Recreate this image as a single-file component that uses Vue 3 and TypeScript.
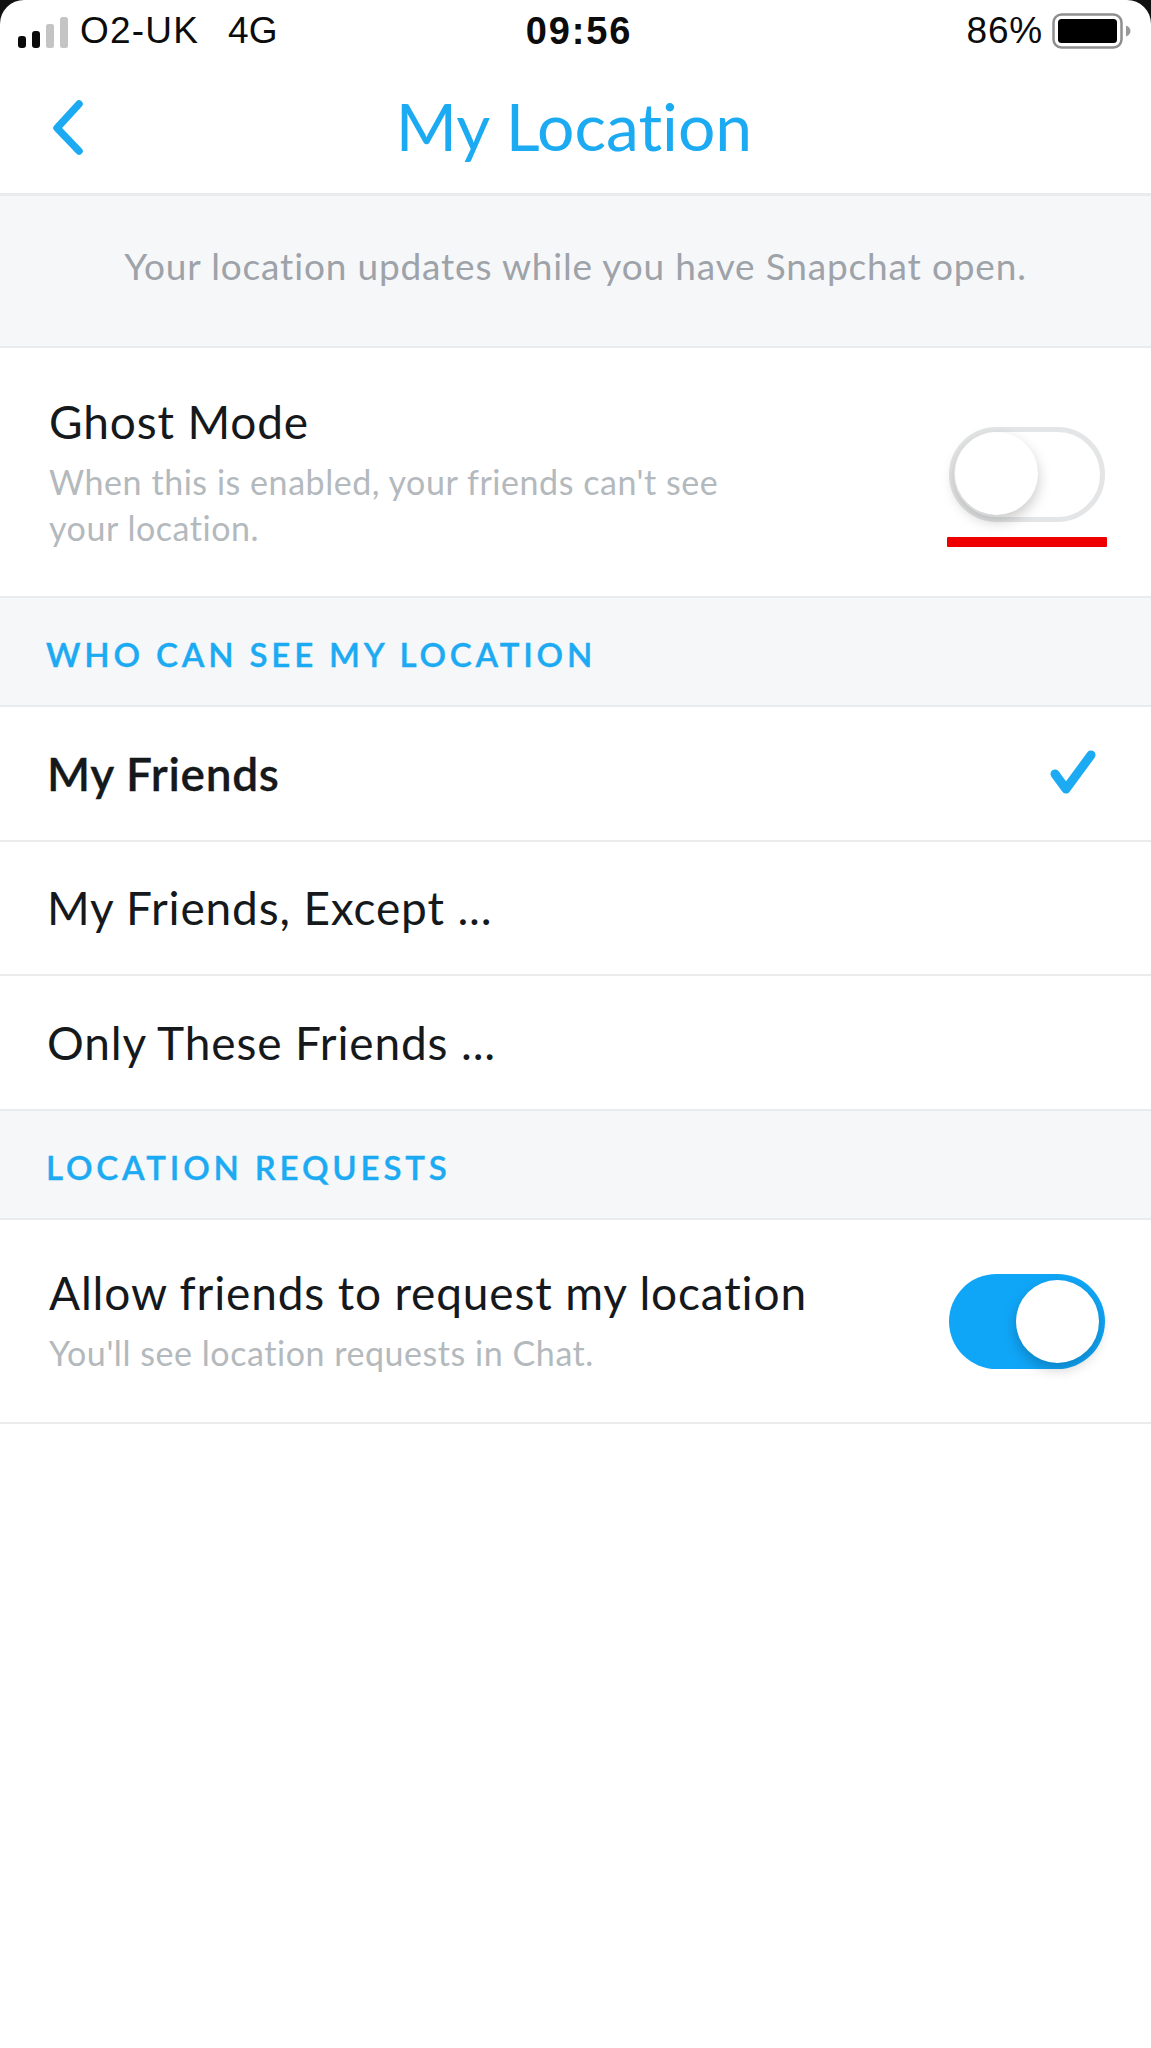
<script setup lang="ts">
const friendRows = [
  { label: 'My Friends', selected: true },
  { label: 'My Friends, Except ...', selected: false },
  { label: 'Only These Friends ...', selected: false },
]
</script>

<template>
  <div class="screen">
    <div class="status">
      <span class="corner corner-l"></span>
      <span class="corner corner-r"></span>
      <div class="status-left">
        <svg class="signal" width="50" height="32" viewBox="0 0 50 32">
          <rect x="0" y="20" width="8" height="12" rx="3" fill="#0a0a0a" />
          <rect x="14" y="15" width="8" height="17" rx="3" fill="#0a0a0a" />
          <rect x="28" y="8" width="8" height="24" rx="2.500" fill="#c4c4c4" />
          <rect x="42" y="1" width="8" height="31" rx="2.500" fill="#c4c4c4" />
        </svg>
        <span class="carrier">O2-UK</span>
        <span class="net">4G</span>
      </div>
      <div class="time">09:56</div>
      <div class="status-right">
        <span class="pct">86%</span>
        <svg class="battery" width="80" height="36" viewBox="0 0 80 36">
          <rect x="1.500" y="1.500" width="68" height="33" rx="8" fill="#fff" stroke="#8e8e8e" stroke-width="2.500" />
          <rect x="6" y="6" width="59" height="24" rx="3.500" fill="#000" />
          <path d="M74 12.500c3 1 4.500 3 4.500 5.500s-1.500 4.500-4.500 5.500z" fill="#9a9a9a" />
        </svg>
      </div>
    </div>

    <header class="nav">
      <svg class="back" width="36" height="60" viewBox="0 0 36 60">
        <path d="M29 6 L7 30 L29 53" fill="none" stroke="#1cabf2" stroke-width="7.500" stroke-linecap="round" stroke-linejoin="round" />
      </svg>
      <h1 class="title">My Location</h1>
    </header>

    <div class="banner">Your location updates while you have Snapchat open.</div>

    <section class="toggle-row ghost">
      <div class="toggle-text">
        <div class="row-title">Ghost Mode</div>
        <div class="row-sub">When this is enabled, your friends can't see<br />your location.</div>
      </div>
      <div class="toggle-col">
        <div class="switch off"><span class="knob"></span></div>
        <div class="redline"></div>
      </div>
    </section>

    <div class="section-head">WHO CAN SEE MY LOCATION</div>

    <div v-for="row in friendRows" :key="row.label" class="option" :class="{ selected: row.selected }">
      <span>{{ row.label }}</span>
      <svg v-if="row.selected" class="check" width="56" height="50" viewBox="0 0 56 50">
        <path d="M7 26 L18 41 L43 7" fill="none" stroke="#1cabf2" stroke-width="9" stroke-linecap="round" stroke-linejoin="round" />
      </svg>
    </div>

    <div class="section-head">LOCATION REQUESTS</div>

    <section class="toggle-row requests">
      <div class="toggle-text">
        <div class="row-title">Allow friends to request my location</div>
        <div class="row-sub">You'll see location requests in Chat.</div>
      </div>
      <div class="switch on"><span class="knob"></span></div>
    </section>
  </div>
</template>

<style>
html, body { background: #fff; }
</style>

<style scoped>
.screen {
  position: relative;
  width: 1151px;
  height: 2048px;
  background: #fff;
  overflow: hidden;
  font-family: Lato, "Open Sans", sans-serif;
  font-variant-ligatures: none;
  color: #16191c;
}
.status {
  position: relative;
  height: 62px;
  display: grid;
  grid-template-columns: 1fr auto 1fr;
  align-items: center;
  padding: 0 19px 0 18px;
  font-family: "Liberation Sans", Arial, sans-serif;
  font-size: 37px;
  color: #0c0c0c;
}
.corner { position: absolute; top: 0; width: 24px; height: 24px; overflow: hidden; }
.corner::before {
  content: "";
  position: absolute;
  width: 48px;
  height: 48px;
  border-radius: 50%;
  box-shadow: 0 0 0 30px #111;
}
.corner-l { left: 0; }
.corner-l::before { left: 0; top: 0; }
.corner-r { right: 0; }
.corner-r::before { right: 0; top: 0; }
.status-left { display: flex; align-items: center; }
.signal { margin-right: 12px; margin-top: 1px; }
.carrier { letter-spacing: 1.2px; }
.net { margin-left: 29px; }
.time { font-size: 38px; font-weight: 700; letter-spacing: 1.9px; padding-left: 8px; }
.status-right { display: flex; align-items: center; justify-content: flex-end; gap: 9px; }
.pct { letter-spacing: 0.8px; }
.nav {
  position: relative;
  display: flex;
  align-items: center;
  justify-content: center;
  padding-right: 3px;
  padding-bottom: 4px;
  box-sizing: content-box;
  height: 127px;
  border-bottom: 3px solid #e9ebed;
}
.back { position: absolute; left: 50px; top: 36px; }
.title {
  margin: 0;
  font-size: 66px;
  font-weight: 400;
  color: #1cabf2;
  line-height: 1;
}
.banner {
  height: 152px;
  box-sizing: border-box;
  background: #f6f7f9;
  border-bottom: 2px solid #e9ebed;
  text-align: center;
  padding-top: 45px;
  font-size: 37px;
  line-height: 50px;
  letter-spacing: 0.84px;
  color: #9da3a9;
}
.toggle-row {
  display: flex;
  justify-content: space-between;
  align-items: flex-start;
  padding: 0 46px 0 49px;
  box-sizing: border-box;
  border-bottom: 2px solid #e9ebed;
}
.ghost { height: 250px; padding-top: 46px; padding-right: 44px; }
.requests { height: 204px; padding-top: 45px; }
.row-title { font-size: 46px; line-height: 56px; letter-spacing: 0.85px; color: #16191c; }
.row-sub { font-size: 34px; line-height: 46px; letter-spacing: 0.55px; color: #b3b9bd; margin-top: 9px; }
.toggle-col { display: flex; flex-direction: column; align-items: center; }
.switch {
  position: relative;
  width: 156px;
  height: 95px;
  box-sizing: border-box;
  border-radius: 48px;
}
.ghost .switch { margin-top: 33px; }
.requests .switch { margin-top: 9px; }
.switch.off { border: 5px solid #e4e5e6; background: #fff; }
.switch.on { background: #10a6f8; }
.knob {
  position: absolute;
  width: 83px;
  height: 83px;
  border-radius: 50%;
  background: #fff;
  box-shadow: 0 6px 14px rgba(0, 0, 0, 0.22);
}
.off .knob { left: 1px; top: 0; }
.on .knob { right: 6px; top: 6px; }
.redline { width: 160px; height: 10px; background: #ef0000; margin-top: 15px; border-radius: 1px; }
.section-head {
  height: 109px;
  box-sizing: border-box;
  background: #f6f7f9;
  border-bottom: 2px solid #e9ebed;
  padding: 36px 0 0 46px;
  font-size: 33px;
  line-height: 40px;
  font-weight: 600;
  letter-spacing: 3.85px;
  -webkit-text-stroke: 0.4px #1cabf2;
  color: #1cabf2;
}
.option {
  display: flex;
  align-items: center;
  justify-content: space-between;
  height: 134.67px;
  box-sizing: border-box;
  padding: 0 47px;
  font-size: 46px;
  letter-spacing: 0.85px;
  border-bottom: 2px solid #e9ebed;
}
.option.selected { font-weight: 600; letter-spacing: 0.7px; -webkit-text-stroke: 0.3px #16191c; }
</style>
